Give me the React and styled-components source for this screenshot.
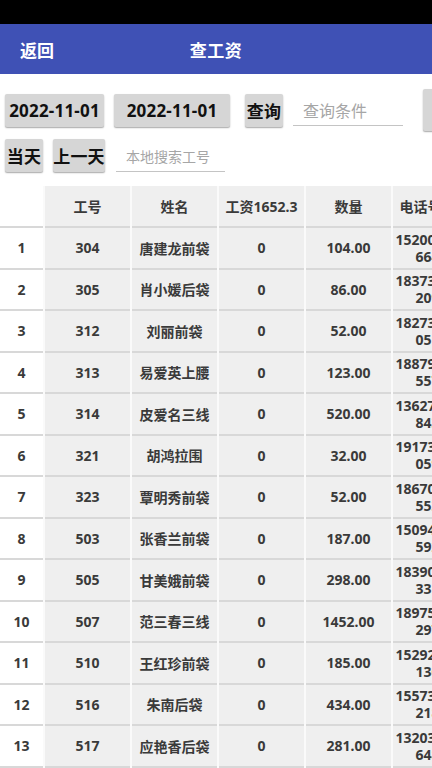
import React from "react";
import styled, { createGlobalStyle } from "styled-components";

const GlobalStyle = createGlobalStyle`
  html, body {
    margin: 0;
    padding: 0;
    background: #fff;
    width: 432px;
    height: 768px;
    overflow: hidden;
    font-family: "Noto Sans", "Noto Sans CJK SC", sans-serif;
  }
`;

const rows = [
  ["304", "唐建龙前袋", "0", "104.00", "15200837664"],
  ["305", "肖小媛后袋", "0", "86.00", "18373261209"],
  ["312", "刘丽前袋", "0", "52.00", "18273540051"],
  ["313", "易爱英上腰", "0", "123.00", "18879316557"],
  ["314", "皮爱名三线", "0", "520.00", "13627092843"],
  ["321", "胡鸿拉围", "0", "32.00", "19173658059"],
  ["323", "覃明秀前袋", "0", "52.00", "18670245553"],
  ["503", "张香兰前袋", "0", "187.00", "15094713592"],
  ["505", "甘美娥前袋", "0", "298.00", "18390526331"],
  ["507", "范三春三线", "0", "1452.00", "18975104297"],
  ["510", "王红珍前袋", "0", "185.00", "15292870136"],
  ["516", "朱南后袋", "0", "434.00", "15573649218"],
  ["517", "应艳香后袋", "0", "281.00", "13203418648"],
];

export default function App() {
  return (
    <Page>
      <GlobalStyle />
      <StatusBar />
      <AppBar>
        <BackLink>返回</BackLink>
        <Title>查工资</Title>
        <span />
      </AppBar>

      <Toolbar>
        <ToolRow>
          <GrayButton $w="99px">2022-11-01</GrayButton>
          <GrayButton $w="116px">2022-11-01</GrayButton>
          <GrayButton $w="38px" $ml="5px">查询</GrayButton>
          <LineInput placeholder="查询条件" $w="110px" $size="16px" />
          <GrayButton $w="60px" $h="42px" $ml="10px" $align="flex-end">
            导出
          </GrayButton>
        </ToolRow>
        <ToolRow $mt="8px">
          <GrayButton $w="38px">当天</GrayButton>
          <GrayButton $w="52px">上一天</GrayButton>
          <LineInput placeholder="本地搜索工号" $w="109px" $size="14px" $ml="1px" />
        </ToolRow>
      </Toolbar>

      <Table>
        <colgroup>
          <col style={{ width: 44 }} />
          <col style={{ width: 87 }} />
          <col style={{ width: 87 }} />
          <col style={{ width: 87 }} />
          <col style={{ width: 87 }} />
          <col style={{ width: 70 }} />
        </colgroup>
        <thead>
          <HeadRow>
            <IndexCell />
            <Cell>工号</Cell>
            <Cell>姓名</Cell>
            <Cell>工资1652.3</Cell>
            <Cell>数量</Cell>
            <Cell>电话号码</Cell>
          </HeadRow>
        </thead>
        <tbody>
          {rows.map((r, i) => (
            <BodyRow key={i}>
              <IndexCell>{i + 1}</IndexCell>
              {r.map((v, j) => (
                <Cell key={j} $phone={j === 4}>
                  {v}
                </Cell>
              ))}
            </BodyRow>
          ))}
        </tbody>
      </Table>
    </Page>
  );
}

const Page = styled.div`
  width: 432px;
  height: 768px;
  overflow: hidden;
`;

const StatusBar = styled.div`
  height: 24px;
  background: #000;
`;

const AppBar = styled.div`
  height: 50px;
  background: #3f51b5;
  display: grid;
  grid-template-columns: 1fr auto 1fr;
  align-items: center;
  color: #fff;
  font-size: 17px;
  font-weight: 700;
`;

const BackLink = styled.span`
  padding-left: 20px;
`;

const Title = styled.span`
  letter-spacing: 0.5px;
`;

const Toolbar = styled.div`
  padding: 15px 0 0 5px;
  display: flex;
  flex-direction: column;
`;

const ToolRow = styled.div`
  display: flex;
  align-items: center;
  gap: 10px;
  white-space: nowrap;
  min-height: 42px;
  margin-top: ${(p) => p.$mt || "0"};
  &:last-child {
    min-height: 33px;
  }
`;

const GrayButton = styled.button`
  flex: none;
  display: flex;
  align-items: center;
  justify-content: ${(p) => p.$align || "center"};
  width: ${(p) => p.$w};
  height: ${(p) => p.$h || "33px"};
  padding: 0;
  margin-left: ${(p) => p.$ml || "0"};
  border: none;
  border-radius: 2px;
  background: #d6d6d6;
  box-shadow: 0 1px 1.5px rgba(0, 0, 0, 0.35);
  font-family: inherit;
  font-size: 17px;
  font-weight: 700;
  color: #111;
  letter-spacing: 0.2px;
`;

const LineInput = styled.input`
  flex: none;
  width: ${(p) => p.$w};
  height: 30px;
  box-sizing: border-box;
  border: none;
  border-bottom: 1px solid #c4c4c4;
  padding: 0 0 0 10px;
  margin: 2px 0 0 ${(p) => p.$ml || "0"};
  background: transparent;
  outline: none;
  font-family: inherit;
  font-size: ${(p) => p.$size};
  &::placeholder {
    color: #a6a6a6;
  }
`;

const Table = styled.table`
  margin-top: 14px;
  width: 462px;
  table-layout: fixed;
  border-collapse: collapse;
  font-size: 14px;
  font-weight: 700;
  color: #3a3a3a;
`;

const HeadRow = styled.tr`
  height: 41px;
  border-bottom: 2px solid #d8d8d8;
`;

const BodyRow = styled.tr`
  height: 41.5px;
  border-bottom: 2px solid #d8d8d8;
`;

const Cell = styled.td`
  background: #efefef;
  border-left: 2px solid #fafafa;
  text-align: center;
  vertical-align: middle;
  padding: 0 2px;
  line-height: ${(p) => (p.$phone ? "17px" : "normal")};
  word-break: break-all;
  white-space: ${(p) => (p.$phone ? "normal" : "nowrap")};
  overflow: hidden;
`;

const IndexCell = styled.td`
  background: #fff;
  text-align: center;
  vertical-align: middle;
  padding: 0;
`;
